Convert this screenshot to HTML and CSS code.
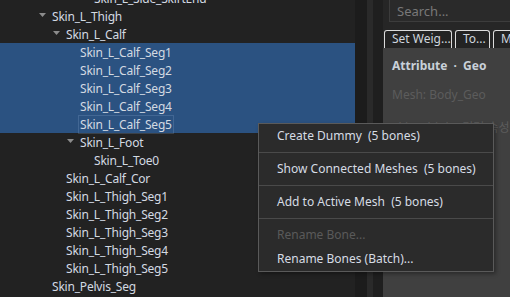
FILE: index.html
```html
<!DOCTYPE html>
<html>
<head>
<meta charset="utf-8">
<link rel="stylesheet" href="styles.css">
</head>
<body>
<div class="app">
  <div class="tree">
    <ul class="rows">
      <li class="row d3"><span class="noarrow"></span><span class="label">Skin_L_Side_SkirtEnd</span></li>
      <li class="row d0"><span class="arrow"><svg width="7" height="4" viewBox="0 0 7 4"><polygon points="0,0 7,0 3.5,4" fill="#8c8c8c"/></svg></span><span class="label">Skin_L_Thigh</span></li>
      <li class="row d1"><span class="arrow"><svg width="7" height="4" viewBox="0 0 7 4"><polygon points="0,0 7,0 3.5,4" fill="#8c8c8c"/></svg></span><span class="label">Skin_L_Calf</span></li>
      <li class="row d2 sel"><span class="noarrow"></span><span class="label">Skin_L_Calf_Seg1</span></li>
      <li class="row d2 sel"><span class="noarrow"></span><span class="label">Skin_L_Calf_Seg2</span></li>
      <li class="row d2 sel"><span class="noarrow"></span><span class="label">Skin_L_Calf_Seg3</span></li>
      <li class="row d2 sel"><span class="noarrow"></span><span class="label">Skin_L_Calf_Seg4</span></li>
      <li class="row d2 sel focus"><span class="noarrow"></span><span class="label">Skin_L_Calf_Seg5</span></li>
      <li class="row d1b"><span class="arrow"><svg width="7" height="4" viewBox="0 0 7 4"><polygon points="0,0 7,0 3.5,4" fill="#8c8c8c"/></svg></span><span class="label">Skin_L_Foot</span></li>
      <li class="row d3"><span class="noarrow"></span><span class="label">Skin_L_Toe0</span></li>
      <li class="row d1"><span class="noarrow"></span><span class="label">Skin_L_Calf_Cor</span></li>
      <li class="row d1"><span class="noarrow"></span><span class="label">Skin_L_Thigh_Seg1</span></li>
      <li class="row d1"><span class="noarrow"></span><span class="label">Skin_L_Thigh_Seg2</span></li>
      <li class="row d1"><span class="noarrow"></span><span class="label">Skin_L_Thigh_Seg3</span></li>
      <li class="row d1"><span class="noarrow"></span><span class="label">Skin_L_Thigh_Seg4</span></li>
      <li class="row d1"><span class="noarrow"></span><span class="label">Skin_L_Thigh_Seg5</span></li>
      <li class="row d0"><span class="noarrow"></span><span class="label">Skin_Pelvis_Seg</span></li>
    </ul>
  </div>
  <div class="scrolltrack"></div>
  <div class="splitter"></div>
  <div class="gutter"></div>
  <div class="side">
    <div class="side-top">
      <div class="search">Search...</div>
      <div class="tabs">
        <div class="tab">Set Weig...</div>
        <div class="tab">To...</div>
        <div class="tab">M...</div>
      </div>
    </div>
    <div class="content">
      <div class="title">Attribute <span class="dot">·</span> Geo</div>
      <div class="dim">Mesh: Body_Geo</div>
      <div class="dim dim2">Skin_Thigh · 미러 속성</div>
    </div>
  </div>

  <div class="menu">
    <div class="item">Create Dummy  (5 bones)</div>
    <div class="sep"></div>
    <div class="item">Show Connected Meshes  (5 bones)</div>
    <div class="sep"></div>
    <div class="item">Add to Active Mesh  (5 bones)</div>
    <div class="sep"></div>
    <div class="item disabled">Rename Bone...</div>
    <div class="item">Rename Bones (Batch)...</div>
  </div>
</div>
</body>
</html>
```

FILE: styles.css
```css
* { box-sizing: border-box; }
html, body { margin: 0; padding: 0; }
body {
  width: 510px;
  height: 297px;
  overflow: hidden;
  background: #222222;
  font-family: "Noto Sans", "Noto Sans CJK KR", sans-serif;
  font-size: 12px;
}
.app {
  position: relative;
  display: flex;
  width: 510px;
  height: 297px;
  overflow: hidden;
}
.tree {
  width: 355px;
  flex: none;
  background: #222222;
  overflow: hidden;
}
.rows {
  list-style: none;
  margin: -11px 0 0 0;
  padding: 0;
}
.row {
  display: flex;
  align-items: center;
  height: 18px;
  color: #d3dae2;
  white-space: nowrap;
  letter-spacing: -0.2px;
}
.row.sel { background: #2b5281; }
.d0 { padding-left: 38px; }
.d1 { padding-left: 52px; }
.d1b { padding-left: 66px; }
.d2 { padding-left: 66px; }
.d3 { padding-left: 80px; }
.arrow, .noarrow {
  width: 14px;
  flex: none;
  display: flex;
  align-items: center;
  padding-left: 1px;
  margin-top: -3px;
}
.arrow svg { display: block; }
.label { padding: 1px 2px; margin-left: -2px; }
.focus .label { outline: 1px solid rgba(160, 190, 225, 0.2); outline-offset: -1px; }
.scrolltrack { width: 12px; flex: none; background: #1c1c1c; }
.splitter { width: 6px; flex: none; background: #2a2a2a; }
.gutter { width: 10px; flex: none; background: #1f1f1f; }
.side {
  width: 127px;
  flex: none;
  display: flex;
  flex-direction: column;
  overflow: hidden;
}
.side-top {
  background: #262626;
  padding: 0 0 0 1px;
}
.search {
  margin: -6px 0 0 5px;
  width: 140px;
  height: 28px;
  border: 1px solid #3c3c3c;
  background: #2a2a2a;
  color: #787878;
  font-size: 13px;
  padding: 7px 0 0 7px;
  white-space: nowrap;
}
.tabs {
  display: flex;
  gap: 3px;
  margin-top: 8px;
  height: 18px;
  white-space: nowrap;
}
.tab {
  flex: none;
  height: 18px;
  border: 1px solid #dcdcdc;
  border-bottom: none;
  border-radius: 3px 3px 0 0;
  background: #232323;
  color: #cfd6de;
  font-size: 12px;
  line-height: 16px;
  padding: 0 7px;
}
.tab:first-child { width: 68px; }
.tab:nth-child(2) { width: 35px; }
.content {
  flex: 1;
  background: #404040;
  padding: 8px 0 0 9px;
  white-space: nowrap;
}
.title {
  color: #c9d1d9;
  font-weight: bold;
  font-size: 12px;
  line-height: 20px;
}
.dot { margin: 0 3px; }
.dim {
  color: #5c5c5c;
  font-size: 12px;
  margin-top: 11px;
  line-height: 16px;
}
.dim2 { margin-top: 17px; }
.menu {
  position: absolute;
  left: 258px;
  top: 123px;
  width: 236px;
  background: #2b2b2b;
  border: 1px solid #5a5a5a;
  box-shadow: 2px 2px 4px rgba(0, 0, 0, 0.35);
}
.item {
  height: 24px;
  line-height: 24px;
  padding-left: 18px;
  color: #d6dce4;
  font-size: 12px;
  white-space: pre;
}
.item.disabled { color: #5a5a5a; }
.sep {
  height: 1px;
  margin: 4px 0;
  background: #4a4a4a;
}
```
